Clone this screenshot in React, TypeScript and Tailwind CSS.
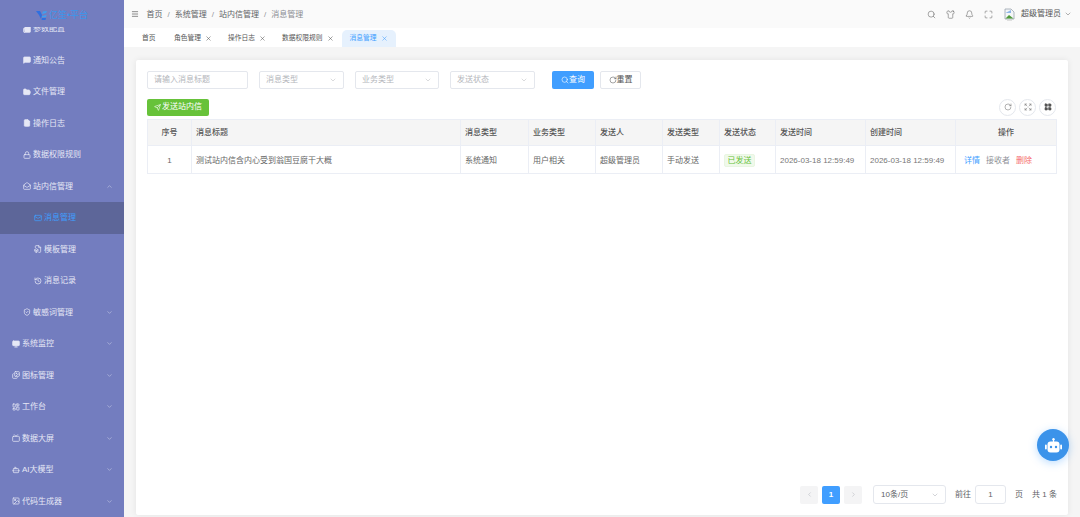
import {
  Menu, Search, Shirt, Bell, Maximize, ChevronDown, ChevronUp, ChevronLeft, ChevronRight, X, Send, RotateCw, LayoutGrid,
  Newspaper, MessageSquare, FolderOpen, FileText, Lock, Mail, MailOpen, FileBox, History, ShieldCheck, Monitor, Images,
  LayoutDashboard, Tv, Bot, Image, Expand,
} from 'lucide-react';

const font = 'font-["Liberation_Sans","Noto_Sans_CJK_SC",sans-serif]';

const menu = [
  { label: '参数配置', icon: Newspaper, level: 1, solid: true },
  { label: '通知公告', icon: MessageSquare, level: 1, solid: true },
  { label: '文件管理', icon: FolderOpen, level: 1, solid: true },
  { label: '操作日志', icon: FileText, level: 1, solid: true },
  { label: '数据权限规则', icon: Lock, level: 1 },
  { label: '站内信管理', icon: MailOpen, level: 1, arrow: 'up' },
  { label: '消息管理', icon: Mail, level: 2, active: true },
  { label: '模板管理', icon: FileBox, level: 2 },
  { label: '消息记录', icon: History, level: 2 },
  { label: '敏感词管理', icon: ShieldCheck, level: 1, arrow: 'down' },
  { label: '系统监控', icon: Monitor, level: 0, arrow: 'down', solid: true },
  { label: '图标管理', icon: Images, level: 0, arrow: 'down' },
  { label: '工作台', icon: LayoutDashboard, level: 0, arrow: 'down' },
  { label: '数据大屏', icon: Tv, level: 0, arrow: 'down' },
  { label: 'AI大模型', icon: Bot, level: 0, arrow: 'down' },
  { label: '代码生成器', icon: Image, level: 0, arrow: 'down' },
];

const tabs = [
  { label: '首页' },
  { label: '角色管理', close: true },
  { label: '操作日志', close: true },
  { label: '数据权限规则', close: true },
  { label: '消息管理', close: true, active: true },
];

const columns = [
  { label: '序号', width: 'w-[44px]', center: true },
  { label: '消息标题', width: 'w-[269px]' },
  { label: '消息类型', width: 'w-[68px]' },
  { label: '业务类型', width: 'w-[67px]' },
  { label: '发送人', width: 'w-[67px]' },
  { label: '发送类型', width: 'w-[57px]' },
  { label: '发送状态', width: 'w-[56px]' },
  { label: '发送时间', width: 'w-[90px]' },
  { label: '创建时间', width: 'w-[90px]' },
  { label: '操作', width: 'w-[101px]', center: true },
];

function SideItem({ item }: { item: (typeof menu)[number] }) {
  const Icon = item.icon;
  const indent = item.level === 0 ? 'pl-[12px]' : item.level === 1 ? 'pl-[23px]' : 'pl-[34px]';
  const tone = item.active ? 'bg-[#5d6699] text-[#409eff]' : 'text-[#e6e8f5]';
  return (
    <div className={`relative flex h-[31.5px] shrink-0 items-center gap-[2px] ${indent} ${tone}`}>
      <Icon size={8} strokeWidth={2.2} fill={item.solid ? 'currentColor' : 'none'} className="shrink-0" />
      <span className="pt-[1px] text-[8px] leading-none">{item.label}</span>
      {item.arrow === 'up' && <ChevronUp size={7} className="absolute right-[11.5px] text-[#c5c9e6]" />}
      {item.arrow === 'down' && <ChevronDown size={7} className="absolute right-[11.5px] text-[#c5c9e6]" />}
    </div>
  );
}

function Sidebar() {
  return (
    <aside className="flex h-full w-[124px] shrink-0 flex-col overflow-hidden bg-[#737dbf]">
      <div className="relative z-10 flex h-[27px] shrink-0 items-center justify-center gap-[2px] bg-[#737dbf] pt-[3px]">
        <svg width="11" height="9" viewBox="0 0 11 9">
          <path d="M0 0 L4 0 L6 4 L5 8 L3 4Z" fill="#2f6fe0" />
          <path d="M11 0 L7 0.5 L6 3 L10 2Z" fill="#3fa0f0" />
          <path d="M6 5 L10.5 4 L10 6 L6 6.5Z" fill="#3fa0f0" />
          <path d="M6 7 L10 7 L9.5 9 L5.5 9Z" fill="#2f6fe0" />
        </svg>
        <span className="text-[9px] leading-none text-[#3b97ec]">亿笙•平台</span>
      </div>
      <nav className="-mt-[14.5px] flex flex-col pt-[0.5px]">
        {menu.map((item) => (
          <SideItem key={item.label} item={item} />
        ))}
      </nav>
    </aside>
  );
}

function BrokenAvatar() {
  return (
    <svg width="11" height="13" viewBox="0 0 11 13" className="shrink-0">
      <path d="M1 1 H7 L10 4 V11 H1 Z" fill="#f4f6f8" stroke="#9aa3ad" strokeWidth="0.8" />
      <path d="M1.5 5 H7 V2" fill="#8fb6e8" />
      <path d="M1.5 10.5 L5 7 L9.5 10.5 Z" fill="#4f9a3a" />
      <path d="M3 12.6 H8" stroke="#c8c8c8" strokeWidth="0.6" />
    </svg>
  );
}

function Header() {
  return (
    <header className="flex h-[28px] shrink-0 items-center bg-[#fafafa] pl-[7px] pr-[8px] text-[8px] text-[#606266]">
      <Menu size={8} className="shrink-0 text-[#555]" />
      <div className="ml-[7.5px] flex items-center gap-[5px] pt-[1px] leading-none">
        <span>首页</span>
        <span className="text-[#909399]">/</span>
        <span>系统管理</span>
        <span className="text-[#909399]">/</span>
        <span>站内信管理</span>
        <span className="text-[#909399]">/</span>
        <span className="text-[#8a8d93]">消息管理</span>
      </div>
      <div className="ml-auto flex items-center text-[#666]">
        <Search size={9} strokeWidth={1.5} />
        <Shirt size={9} strokeWidth={1.5} className="ml-[10px]" />
        <Bell size={9} strokeWidth={1.5} className="ml-[10.5px]" />
        <Maximize size={9} strokeWidth={1.5} className="ml-[10px]" />
        <div className="ml-[11px]">
          <BrokenAvatar />
        </div>
        <span className="ml-[6px] leading-none text-[#555]">超级管理员</span>
        <ChevronDown size={8} strokeWidth={1.5} className="ml-[3px]" />
      </div>
    </header>
  );
}

function Tabs() {
  return (
    <div className="flex h-[19px] shrink-0 items-end bg-white pl-[10px] text-[6.75px]">
      {tabs.map((tab) => (
        <div
          key={tab.label}
          className={`flex h-[17px] items-center gap-[4px] rounded-t-[5px] px-[8px] leading-none ${
            tab.active ? 'bg-[#e6f1fd] text-[#409eff]' : 'text-[#555]'
          } ${tab.close ? '' : 'mr-[2.5px]'}`}
        >
          <span className="whitespace-nowrap">{tab.label}</span>
          {tab.close && <X size={7} strokeWidth={1.8} />}
        </div>
      ))}
    </div>
  );
}

function SelectBox({ label, width }: { label: string; width: string }) {
  return (
    <div className={`flex h-[18px] items-center justify-between rounded-[2px] border border-[#e4e7ed] px-[6px] ${width}`}>
      <span className="text-[8px] leading-none text-[#b4b6bb]">{label}</span>
      <ChevronDown size={8} strokeWidth={1.5} className="text-[#b4b6bb]" />
    </div>
  );
}

function Filters() {
  return (
    <div className="flex items-center">
      <div className="flex h-[18px] w-[101px] items-center rounded-[2px] border border-[#e4e7ed] px-[6px] text-[8px] leading-none text-[#b4b6bb]">
        请输入消息标题
      </div>
      <div className="ml-[11px] flex gap-[11px]">
        <SelectBox label="消息类型" width="w-[85px]" />
        <SelectBox label="业务类型" width="w-[84px]" />
        <SelectBox label="发送状态" width="w-[85px]" />
      </div>
      <button className="ml-[17px] flex h-[18px] w-[42px] items-center justify-center rounded-[2px] bg-[#409eff] text-[8px] leading-none text-white">
        <Search size={8} strokeWidth={1.8} />
        <span>查询</span>
      </button>
      <button className="ml-[6px] flex h-[18px] w-[41px] items-center justify-center rounded-[2px] border border-[#e4e7ed] text-[8px] leading-none text-[#555]">
        <RotateCw size={8} strokeWidth={1.6} />
        <span>重置</span>
      </button>
    </div>
  );
}

function Toolbar() {
  const circle = 'flex h-[17px] w-[17px] items-center justify-center rounded-full border border-[#e4e7ed] text-[#666]';
  return (
    <div className="mt-[9px] flex h-[18px] items-center justify-between">
      <button className="flex h-[17px] w-[62px] items-center justify-center gap-[1px] rounded-[2px] bg-[#67c23a] text-[8px] leading-none text-white">
        <Send size={7} strokeWidth={2} />
        <span>发送站内信</span>
      </button>
      <div className="flex gap-[3px]">
        <div className={circle}>
          <RotateCw size={8} strokeWidth={1.5} />
        </div>
        <div className={circle}>
          <Expand size={8} strokeWidth={1.5} />
        </div>
        <div className={circle}>
          <LayoutGrid size={8} strokeWidth={2} fill="currentColor" className="text-[#555]" />
        </div>
      </div>
    </div>
  );
}

function MessageTable() {
  const th = 'border border-[#ebeef5] bg-[#f5f5f5] px-[4px] text-[8px] font-medium leading-none text-[#555]';
  const td = 'border border-[#ebeef5] px-[4px] pt-[2px] text-[8px] leading-none text-[#666] whitespace-nowrap';
  return (
    <table className="mt-[3px] w-[909px] table-fixed border-collapse">
      <colgroup>
        {columns.map((col) => (
          <col key={col.label} className={col.width} />
        ))}
      </colgroup>
      <thead>
        <tr className="h-[26px]">
          {columns.map((col) => (
            <th key={col.label} className={`${th} ${col.center ? 'text-center' : 'text-left'}`}>
              {col.label}
            </th>
          ))}
        </tr>
      </thead>
      <tbody>
        <tr className="h-[28px]">
          <td className={`${td} text-center`}>1</td>
          <td className={td}>测试站内信含内心受到翁国豆腐干大概</td>
          <td className={td}>系统通知</td>
          <td className={td}>用户相关</td>
          <td className={td}>超级管理员</td>
          <td className={td}>手动发送</td>
          <td className={td}>
            <span className="inline-block rounded-[2px] border border-[#e9f6e2] bg-[#f0f9eb] px-[2.5px] py-[1.5px] text-[#67c23a]">已发送</span>
          </td>
          <td className={`${td} text-[#777]`}>2026-03-18 12:59:49</td>
          <td className={`${td} text-[#777]`}>2026-03-18 12:59:49</td>
          <td className={td}>
            <div className="flex gap-[6px] pl-[4px]">
              <span className="text-[#409eff]">详情</span>
              <span className="text-[#909399]">接收者</span>
              <span className="text-[#f56c6c]">删除</span>
            </div>
          </td>
        </tr>
      </tbody>
    </table>
  );
}

function Pagination() {
  const arrow = 'flex h-[18px] w-[18px] items-center justify-center rounded-[2px] bg-[#f4f4f5] text-[#b8bbc2]';
  return (
    <div className="-mr-[1px] mt-auto flex items-center justify-end text-[8px] leading-none text-[#606266]">
      <div className={arrow}>
        <ChevronLeft size={7} />
      </div>
      <div className="ml-[4px] flex h-[18px] w-[18px] items-center justify-center rounded-[2px] bg-[#409eff] font-bold text-white">1</div>
      <div className={`ml-[4px] ${arrow}`}>
        <ChevronRight size={7} />
      </div>
      <div className="ml-[11px] flex h-[19px] w-[73px] items-center justify-between rounded-[3px] border border-[#e4e7ed] pl-[7px] pr-[6px]">
        <span>10条/页</span>
        <ChevronDown size={8} strokeWidth={1.5} className="text-[#a8abb2]" />
      </div>
      <span className="ml-[9px]">前往</span>
      <div className="ml-[4px] flex h-[19px] w-[31px] items-center justify-center rounded-[3px] border border-[#e4e7ed]">1</div>
      <span className="ml-[9px]">页</span>
      <span className="ml-[9px]">共 1 条</span>
    </div>
  );
}

function RobotIcon() {
  return (
    <svg width="17" height="15" viewBox="0 0 17 15">
      <circle cx="8.5" cy="1.2" r="1.2" fill="white" />
      <rect x="7.9" y="1.5" width="1.2" height="2.5" fill="white" />
      <rect x="2.5" y="3.5" width="12" height="11" rx="3" fill="white" />
      <rect x="0" y="6.5" width="1.8" height="5" rx="0.9" fill="white" />
      <rect x="15.2" y="6.5" width="1.8" height="5" rx="0.9" fill="white" />
      <circle cx="6" cy="9" r="1.2" fill="#3b93ea" />
      <circle cx="11" cy="9" r="1.2" fill="#3b93ea" />
    </svg>
  );
}

export default function App() {
  return (
    <div className={`relative flex h-screen w-full overflow-hidden bg-[#f5f5f5] ${font}`}>
      <Sidebar />
      <main className="flex h-full min-w-0 flex-1 flex-col">
        <Header />
        <Tabs />
        <div className="flex min-h-0 flex-1 flex-col pb-[2px] pl-[12px] pr-[12px] pt-[13px]">
          <div className="flex flex-1 flex-col rounded-[2px] bg-white pb-[11px] pl-[11px] pr-[12px] pt-[11px] shadow-[0_0_6px_rgba(0,0,0,0.08)]">
            <Filters />
            <Toolbar />
            <MessageTable />
            <Pagination />
          </div>
        </div>
      </main>
      <div className="absolute left-[1037px] top-[429px] flex h-[32px] w-[32px] items-center justify-center rounded-full bg-[#3b93ea] shadow-[0_2px_8px_rgba(64,158,255,0.35)]">
        <RobotIcon />
      </div>
    </div>
  );
}
